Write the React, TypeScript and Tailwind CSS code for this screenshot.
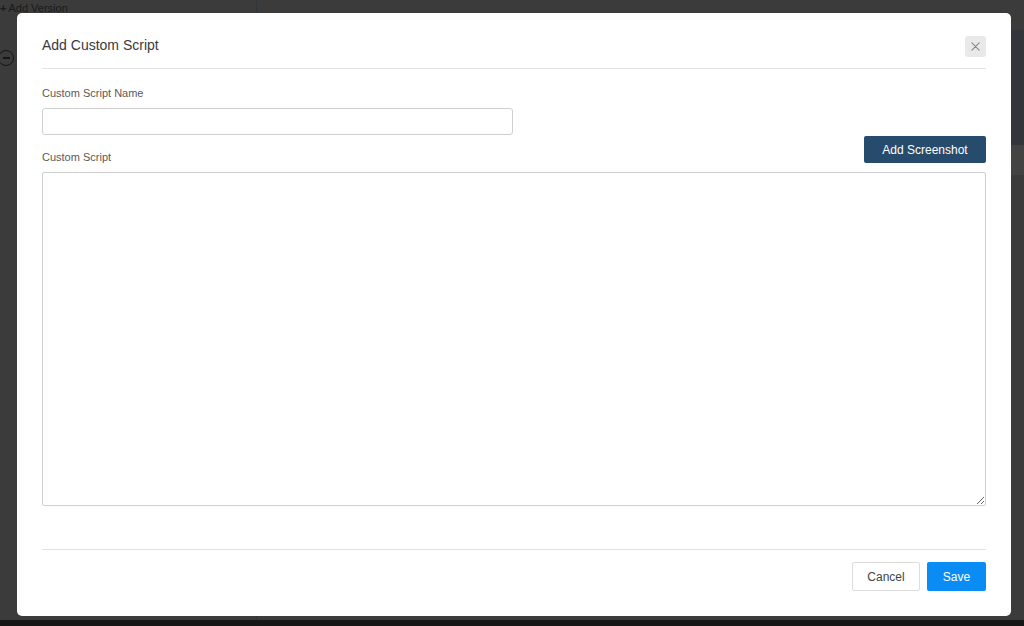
import React from "react";

function CloseIcon() {
  return (
    <svg width="9" height="9" viewBox="0 0 10 10" fill="none">
      <path d="M1 1l8 8M9 1l-8 8" stroke="#8a8a8a" strokeWidth="1.3" strokeLinecap="round" />
    </svg>
  );
}

function Backdrop() {
  return (
    <>
      {/* dimmed page behind the dialog */}
      <div className="absolute left-0 top-[1px] flex items-center gap-[2px] text-[11px] leading-[14px] text-[#1a1a1a]">
        <span className="font-bold">+</span>
        <span>Add Version</span>
      </div>
      <div className="absolute left-[-2px] top-[50px] flex h-[16px] w-[16px] items-center justify-center rounded-full border-[1.5px] border-[#161616]">
        <div className="h-[1.5px] w-[7px] bg-[#161616]" />
      </div>
      <div className="absolute left-[256px] top-0 h-full w-px bg-[#30353a]" />
      <div className="absolute right-0 top-[30px] h-[115px] w-[20px] bg-[#32363a]" />
      <div className="absolute right-0 top-[145px] h-[30px] w-[20px] bg-[#434343]" />
      <div className="absolute bottom-0 left-0 h-[6px] w-full bg-[#161616]" />
    </>
  );
}

export default function App() {
  return (
    <div
      className="relative h-[626px] w-[1024px] overflow-hidden bg-[#3b3b3b]"
      style={{ fontFamily: '"Liberation Sans", Arial, sans-serif' }}
    >
      <Backdrop />

      <div className="absolute left-[17px] top-[13px] flex h-[603px] w-[994px] flex-col rounded-[5px] bg-white px-[25px] pb-[25px]">
        <div className="flex items-start justify-between border-b border-[#e3e3e3] pt-[22px] pb-[11px]">
          <h2 className="text-[14px] leading-[20px] text-[#3a3a3a]">Add Custom Script</h2>
          <button className="mt-[1px] flex h-[21px] w-[21px] items-center justify-center rounded-[3px] bg-[#e9e9e9]">
            <CloseIcon />
          </button>
        </div>

        <div className="flex flex-1 flex-col pt-[17px]">
          <label className="text-[11px] leading-[14px] text-[#5a5a5a]">Custom Script Name</label>
          <input
            type="text"
            className="mt-[8px] h-[27px] w-[471px] rounded-[3px] border border-[#cfcfcf] px-2 text-[12px] outline-none"
          />

          <div className="mt-[1px] flex items-end justify-between">
            <label className="mb-[-1px] text-[11px] leading-[14px] text-[#5a5a5a]">Custom Script</label>
            <button className="h-[27px] w-[122px] rounded-[2px] bg-[#264b6d] text-[12px] text-white">
              Add Screenshot
            </button>
          </div>
          <textarea className="mt-[9px] h-[334px] w-full rounded-[2px] border border-[#cfcfcf] p-2 text-[12px] outline-none" />
        </div>

        <div className="flex justify-end gap-[7px] border-t border-[#e3e3e3] pt-[12px]">
          <button className="h-[29px] w-[68px] rounded-[2px] border border-[#dcdcdc] bg-white text-[12px] text-[#444]">
            Cancel
          </button>
          <button className="h-[29px] w-[59px] rounded-[2px] bg-[#0a8cf5] text-[12px] text-white">
            Save
          </button>
        </div>
      </div>
    </div>
  );
}
